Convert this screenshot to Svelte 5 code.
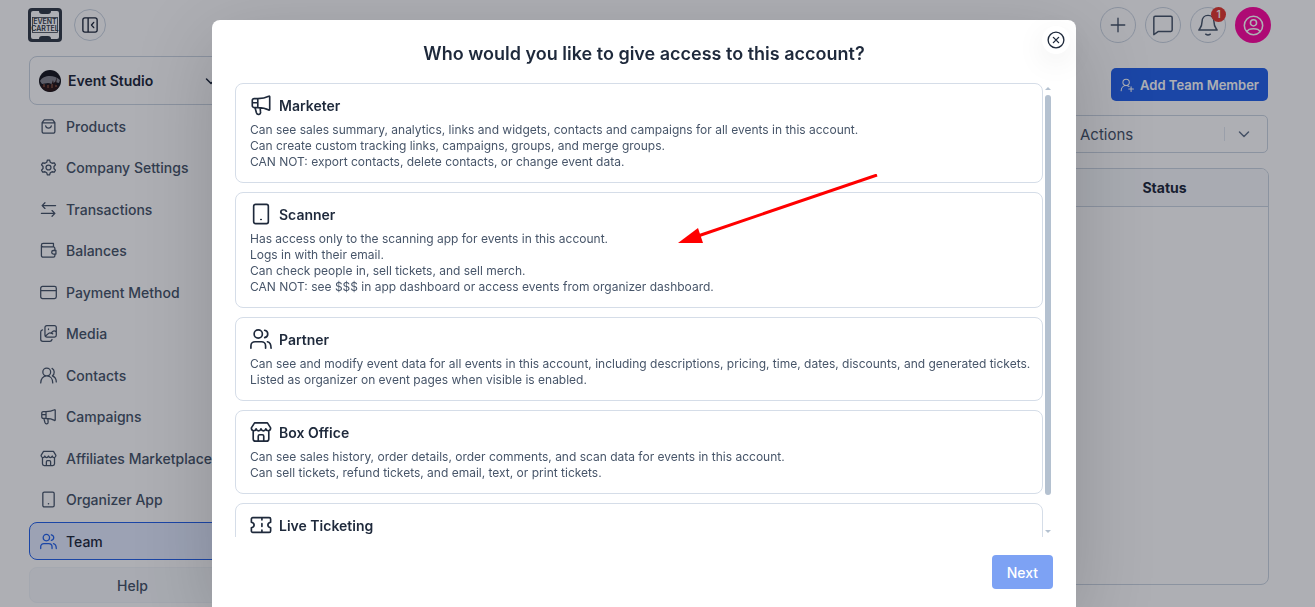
<script>
const icons = {
	bag: 'M6 2.500h12L21 6.500V19a2.500 2.500 0 0 1-2.500 2.500h-13A2.500 2.500 0 0 1 3 19V6.500zM3 7h18M8 11c.5 4.500 7.500 4.500 8 0',
	gear: 'M10.500 1.500h3l1 3 2.500 1.500 3.200-.6 1.600 2.800-2.100 2.400v2.800l2.100 2.400-1.600 2.800-3.200-.6-2.500 1.500-1 3h-3l-1-3L7 18l-3.200.6-1.600-2.800 2.100-2.400v-2.800L2.200 8.200l1.600-2.800L7 6l2.500-1.500zM12 8.500a3.500 3.500 0 1 0 0 7 3.500 3.500 0 0 0 0-7z',
	transfer: 'M22 6.500H3M7 2.500l-4 4 4 4M2 17.500h19M17 13.500l4 4-4 4',
	wallet: 'M2 4.500V19a2.500 2.500 0 0 0 2.500 2.500H19a2 2 0 0 0 2-2V17M21 12V9a2 2 0 0 0-2-2H4.500A2.500 2.500 0 0 1 2 4.500 2.500 2.500 0 0 1 4.500 2H19v5M19 12h3.500v5H19a2.500 2.500 0 0 1 0-5z',
	card: 'M3.500 3.500h17A2.500 2.500 0 0 1 23 6v12a2.500 2.500 0 0 1-2.500 2.500h-17A2.500 2.500 0 0 1 1 18V6a2.500 2.500 0 0 1 2.500-2.500zM1 9.500h22',
	media: 'M9.500 1h11A2.500 2.500 0 0 1 23 3.500v11a2.500 2.500 0 0 1-2.500 2.500h-11A2.500 2.500 0 0 1 7 14.500v-11A2.500 2.500 0 0 1 9.500 1zM7.500 16l5-4.500c2-1.500 4 .5 5.500 1M16 11l3-2.500c1.500-1 3 .5 4 1.500M12 5.500v1M3.500 7C2 7.500 1 8.500 1 10v10a3 3 0 0 0 3 3h10c1.500 0 2.500-1 3-2.500',
	contacts: 'M9.500 1.500a5.500 5.500 0 1 0 0 11 5.500 5.500 0 0 0 0-11zM1 22.500c0-6 3.500-10 8.500-10s8.500 4 8.500 10M17 2c4 2 4 8 .5 10.500 3.500 1.500 5.500 5 5.500 8.500',
	megaphone: 'M20.500 2.500c.5-.3 1 0 1 .5v14c0 .6-.5.800-1 .500C17 15.500 13 14.800 8.500 14.800h-4a2 2 0 0 1-2-2V7a2 2 0 0 1 2-2h4c4.500 0 8.500-.7 12-2.500zM8.500 5v10M2.500 9.500h6M5.500 15l1.500 5.500c1 3 5 2 4.500-1L11 15',
	shop: 'M5 2h14l3.500 5.500c0 4-4.500 4-5.200 1-1 3-4.300 3-5.300 0-1 3-4.300 3-5.300 0-.7 3-5.200 3-5.200-1zM3.500 11v8.500A2.500 2.500 0 0 0 6 22h12a2.500 2.500 0 0 0 2.500-2.500V11M9 22v-5.500a1.500 1.500 0 0 1 1.500-1.500h3a1.500 1.500 0 0 1 1.500 1.500V22',
	device: 'M6 1.500h12a2 2 0 0 1 2 2v17a2 2 0 0 1-2 2H6a2 2 0 0 1-2-2v-17a2 2 0 0 1 2-2zM11.800 18h.4',
	team: 'M9 2a4.500 4.500 0 1 0 0 9 4.500 4.500 0 0 0 0-9zM1 22v-2.500A4.500 4.500 0 0 1 5.500 15h7a4.500 4.500 0 0 1 4.500 4.500V22M16 2.500c4.500 1 4.500 7 0 8M19 15c3 .7 4 3 4 7',
	ticket: 'M3 4h18a1.500 1.500 0 0 1 1.500 1.500V9c-4 1-4 5 0 6v3.500A1.500 1.500 0 0 1 21 20H3a1.500 1.500 0 0 1-1.500-1.500V15c4-1 4-5 0-6V5.500A1.500 1.500 0 0 1 3 4zM13 4v2.500M13 10.500v3M13 17.500V20',
	collapse: 'M5 2.500h14A2.500 2.500 0 0 1 21.500 5v14a2.500 2.500 0 0 1-2.500 2.500H5A2.500 2.500 0 0 1 2.500 19V5A2.500 2.500 0 0 1 5 2.500zM9.500 2.500v19M17 8.500 14 12l3 3.500',
	plus: 'M12 3v18M3 12h18',
	chat: 'M3.500 2.500h17A1.500 1.500 0 0 1 22 4v13.500a1.500 1.500 0 0 1-1.500 1.500H7l-5 3.500V4a1.500 1.500 0 0 1 1.500-1.500z',
	bell: 'M12 1.500c-4 0-6.500 3-6.500 7 0 5-1.500 6-3.500 9h20c-2-3-3.500-4-3.500-9 0-4-2.500-7-6.500-7zM9.500 22c1.500 1 3.500 1 5 0',
	account: 'M12 1.500a10.500 10.500 0 1 0 0 21 10.500 10.500 0 0 0 0-21zM12 5.500a3.500 3.500 0 1 0 0 7 3.500 3.500 0 0 0 0-7zM4.500 19c2-4.500 13-4.500 15 0',
	userPlus: 'M10.500 2a5.500 5.500 0 1 0 0 11 5.500 5.500 0 0 0 0-11zM2 22c0-5.500 3.500-9 8.500-9 2 0 3.500.5 5 1.500M19 15v8M15 19h8',
	chevron: 'M3 8l9 9 9-9',
	close: 'M12 1.500a10.500 10.500 0 1 0 0 21 10.500 10.500 0 0 0 0-21zM8.500 8.500l7 7M15.500 8.500l-7 7'
};

const navItems = [
	{ label: 'Products', icon: 'bag' },
	{ label: 'Company Settings', icon: 'gear' },
	{ label: 'Transactions', icon: 'transfer' },
	{ label: 'Balances', icon: 'wallet' },
	{ label: 'Payment Method', icon: 'card' },
	{ label: 'Media', icon: 'media' },
	{ label: 'Contacts', icon: 'contacts' },
	{ label: 'Campaigns', icon: 'megaphone' },
	{ label: 'Affiliates Marketplace', icon: 'shop' },
	{ label: 'Organizer App', icon: 'device' },
	{ label: 'Team', icon: 'team' }
];

const roles = [
	{
		name: 'Marketer',
		icon: 'megaphone',
		lines: [
			'Can see sales summary, analytics, links and widgets, contacts and campaigns for all events in this account.',
			'Can create custom tracking links, campaigns, groups, and merge groups.',
			'CAN NOT: export contacts, delete contacts, or change event data.'
		]
	},
	{
		name: 'Scanner',
		icon: 'device',
		lines: [
			'Has access only to the scanning app for events in this account.',
			'Logs in with their email.',
			'Can check people in, sell tickets, and sell merch.',
			'CAN NOT: see $$$ in app dashboard or access events from organizer dashboard.'
		]
	},
	{
		name: 'Partner',
		icon: 'team',
		lines: [
			'Can see and modify event data for all events in this account, including descriptions, pricing, time, dates, discounts, and generated tickets.',
			'Listed as organizer on event pages when visible is enabled.'
		]
	},
	{
		name: 'Box Office',
		icon: 'shop',
		lines: [
			'Can see sales history, order details, order comments, and scan data for events in this account.',
			'Can sell tickets, refund tickets, and email, text, or print tickets.'
		]
	},
	{ name: 'Live Ticketing', icon: 'ticket', lines: [] }
];

let selected = $state('');
</script>

{#snippet icon(name, size, width = 1.8)}
	<svg class="icon" width={size} height={size} viewBox="0 0 24 24" stroke-width={width} aria-hidden="true">
		<path d={icons[name]} />
	</svg>
{/snippet}

<div class="page">
	<aside class="sidebar">
		<div class="brand">
			<svg width="34" height="34" viewBox="0 0 34 34" role="img" aria-label="Event Cartel">
				<rect width="34" height="34" rx="4" fill="#343c48" />
				<path d="M5 3h6c0 2 1 3 3 3h6c2 0 3-1 3-3h6q2 0 2 2v24q0 2-2 2h-6c0-2-1-3-3-3h-6c-2 0-3 1-3 3H5q-2 0-2-2V5q0-2 2-2z" fill="#fff" />
				<rect x="4.500" y="9.500" width="25" height="15" fill="none" stroke="#343c48" stroke-width=".8" />
				<text x="17" y="16" class="logo-text">EVENT</text>
				<text x="17" y="23" class="logo-text">CARTEL</text>
			</svg>
			<button class="round small" aria-label="Collapse sidebar">{@render icon('collapse', 18)}</button>
		</div>

		<button class="account">
			<svg width="22" height="22" viewBox="0 0 22 22" aria-hidden="true">
				<circle cx="11" cy="11" r="11" fill="#17171e" />
				<path d="M1 11c3-6 14-7 20-1l-1 3-4-1-3 2-4-1-6 1z" fill="#85858e" />
				<path d="M2 16l3-2 2 2 3-3 2 3 2-6 1 5 3-8-1 8 3 1c-3 7-14 8-18 0z" fill="#2a1717" />
				<path d="M5 14v3M9 15v3M13 14v4M17 15v2" stroke="#a2654d" />
			</svg>
			<span>Event Studio</span>
			{@render icon('chevron', 12, 3)}
		</button>

		<nav>
			{#each navItems as item}
				<a href="#{item.icon}" class:active={item.label === 'Team'}>
					{@render icon(item.icon, 17)}
					{item.label}
				</a>
			{/each}
		</nav>

		<button class="help">Help</button>
	</aside>

	<main>
		<header>
			<button class="round" aria-label="Create">{@render icon('plus', 18)}</button>
			<button class="round" aria-label="Messages">{@render icon('chat', 22, 1.6)}</button>
			<button class="round" aria-label="Notifications">
				{@render icon('bell', 22, 1.6)}
				<span class="count">1</span>
			</button>
			<button class="round profile" aria-label="Profile">{@render icon('account', 21)}</button>
		</header>

		<div class="content">
			<button class="add">{@render icon('userPlus', 14)} Add Team Member</button>
			<div class="actions">
				<select aria-label="Actions">
					<option>Actions</option>
				</select>
				<span class="actions-mark">{@render icon('chevron', 12, 3)}</span>
			</div>
			<div class="table-box">
				<table>
					<thead>
						<tr>
							<td></td>
							<th scope="col">Status</th>
						</tr>
					</thead>
				</table>
			</div>
		</div>
	</main>
</div>

<div class="overlay">
	<div class="modal" role="dialog" aria-modal="true" aria-labelledby="modal-title">
		<button class="close" aria-label="Close">{@render icon('close', 18)}</button>
		<h2 id="modal-title">Who would you like to give access to this account?</h2>

		<div class="scroller">
			<div class="roles">
				{#each roles as role}
					<button class="role" class:selected={selected === role.name} onclick={() => (selected = role.name)}>
						<span class="role-name">{@render icon(role.icon, 22)} {role.name}</span>
						{#each role.lines as line}
							<span class="line">{line}</span>
						{/each}
					</button>
				{/each}
			</div>
			<div class="track" aria-hidden="true">
				<svg width="6" height="3" viewBox="0 0 6 3"><path d="M0 3 3 0l3 3z" /></svg>
				<div class="thumb"></div>
				<svg width="6" height="3" viewBox="0 0 6 3"><path d="M0 0l3 3 3-3z" /></svg>
			</div>
		</div>

		<footer>
			<button class="next" disabled={!selected}>Next</button>
		</footer>

		<svg class="pointer" width="200" height="70" viewBox="0 0 200 70" aria-hidden="true">
			<path d="M199 1 20 62" stroke="#f00" stroke-width="3" />
			<path d="M0 69 20 54l5 15z" fill="#f00" />
		</svg>
	</div>
</div>

<style>
	:global(body) { margin: 0; background: #fff; overflow: hidden; font-family: Inter, "Liberation Sans", sans-serif; color: #1e293b; }
	:global(*) { box-sizing: border-box; }
	button, select { font-family: inherit; color: inherit; cursor: pointer; }
	.icon { flex: none; fill: none; stroke: currentColor; stroke-linecap: round; stroke-linejoin: round; }

	.page { display: flex; height: 100vh; }
	.sidebar { display: flex; flex-direction: column; flex: none; width: 236px; padding: 8px 0 4px 29px; }
	.brand { display: flex; align-items: center; gap: 12px; height: 34px; margin: 0 0 14px -1px; }
	.logo-text { font-size: 7px; font-weight: 600; text-anchor: middle; fill: #343c48; }
	.round { position: relative; display: flex; align-items: center; justify-content: center; flex: none; width: 36px; height: 36px; padding: 0; border: 1px solid #cbd5e1; border-radius: 50%; background: none; color: #475569; }
	.round.small { width: 32px; height: 32px; color: #1e293b; }
	.account { display: flex; align-items: center; gap: 7px; flex: none; height: 49px; padding: 0 18px 0 9px; border: 1px solid #cbd5e1; border-radius: 8px; background: none; font-size: 14px; font-weight: 600; }
	.account span { flex: 1; text-align: left; }
	nav { display: flex; flex-direction: column; justify-content: space-between; flex: 1; margin: 2px 0 7px; }
	nav a { display: flex; align-items: center; gap: 9px; height: 38px; padding: 0 10px; border: 1px solid transparent; border-radius: 8px; color: #475569; font-size: 14px; font-weight: 500; text-decoration: none; white-space: nowrap; }
	nav a.active { border-color: #2563eb; background: #e4ecff; color: #1e293b; }
	nav a.active .icon { color: #2563eb; }
	.help { flex: none; height: 36px; border: 1px solid #f1f5f9; border-radius: 8px; background: #f8fafc; color: #475569; font-size: 14px; font-weight: 500; }

	main { display: flex; flex-direction: column; flex: 1; min-width: 0; padding: 7px 44px 22px 24px; }
	header { display: flex; justify-content: flex-end; gap: 9px; }
	.count { position: absolute; top: -1px; right: -1px; width: 15px; height: 15px; border-radius: 50%; background: #e53a30; color: #fff; font-size: 10px; font-weight: 600; line-height: 14px; }
	.profile { border: 0; background: #ff0aa0; color: #fff; }
	.content { display: flex; flex-direction: column; flex: 1; padding: 25px 2px 0 0; }
	.add { display: flex; align-items: center; gap: 6px; align-self: flex-end; height: 33px; margin-right: 1px; padding: 0 9px; border: 0; border-radius: 5px; background: #2563eb; color: #fff; font-size: 13px; font-weight: 600; }
	.actions { display: grid; align-self: flex-end; width: 207px; height: 38px; margin: 14px 1px 15px 0; }
	.actions > * { grid-area: 1 / 1; }
	select { appearance: none; padding: 0 18px; border: 1px solid #cbd5e1; border-radius: 5px; background: none; color: #475569; font-size: 15px; }
	.actions-mark { display: flex; align-items: center; justify-self: end; align-self: center; height: 14px; padding: 0 18px 0 13px; border-left: 1px solid #e2e8f0; color: #64748b; pointer-events: none; }
	.table-box { flex: 1; border: 1px solid #cbd5e1; border-radius: 8px; overflow: hidden; }
	table { width: 100%; border-collapse: collapse; table-layout: fixed; }
	thead tr { height: 37px; background: #f8fafc; }
	th, td { padding: 0; border-bottom: 1px solid #cbd5e1; font-size: 14px; font-weight: 700; }
	th { width: 207px; }

	.overlay { position: fixed; inset: 0; display: flex; justify-content: center; padding: 20px 27px 0 0; background: rgba(10, 12, 28, 0.33); }
	.modal { position: relative; display: flex; flex-direction: column; width: 100%; max-width: 864px; padding: 20px 23px 18px; border-radius: 8px 8px 0 0; background: #fff; box-shadow: 0 20px 80px rgba(0, 0, 0, 0.18); }
	h2 { margin: 0 0 16px; font-size: 18px; font-weight: 600; line-height: 27px; text-align: center; }
	.close { position: absolute; top: 6px; right: 6px; display: flex; align-items: center; justify-content: center; width: 28px; height: 28px; padding: 0; border: 0; border-radius: 50%; background: #fff; box-shadow: 0 8px 30px rgba(0, 0, 0, 0.08); }
	.scroller { display: flex; gap: 2px; flex: 1; min-height: 0; padding-right: 2px; }
	.roles { display: flex; flex-direction: column; gap: 9px; flex: 1; min-width: 0; overflow-y: auto; scrollbar-width: none; }
	.role { display: block; flex: none; padding: 9px 10px 12px 14px; border: 1px solid #d5dde8; border-radius: 8px; background: #fff; text-align: left; }
	.role.selected { border-color: #2563eb; }
	.role-name { display: flex; align-items: center; gap: 7px; height: 24px; margin-bottom: 5px; font-size: 14px; font-weight: 600; }
	.line { display: block; color: #475569; font-size: 12px; line-height: 16px; }
	.track { display: flex; flex-direction: column; justify-content: space-between; width: 6px; padding: 4px 0; fill: #b4c1d0; }
	.track svg { display: block; }
	.thumb { flex: 1; margin: 5px 0 35px; border-radius: 3px; background: #b4c1d0; }
	footer { display: flex; justify-content: flex-end; margin-top: 18px; }
	.next { height: 34px; padding: 0 15px; border: 0; border-radius: 4px; background: #2563eb; color: #fff; font-size: 14px; font-weight: 500; }
	.next:disabled { background: #7da2f4; cursor: default; }
	.pointer { position: absolute; top: 154px; left: 466px; pointer-events: none; }
</style>
